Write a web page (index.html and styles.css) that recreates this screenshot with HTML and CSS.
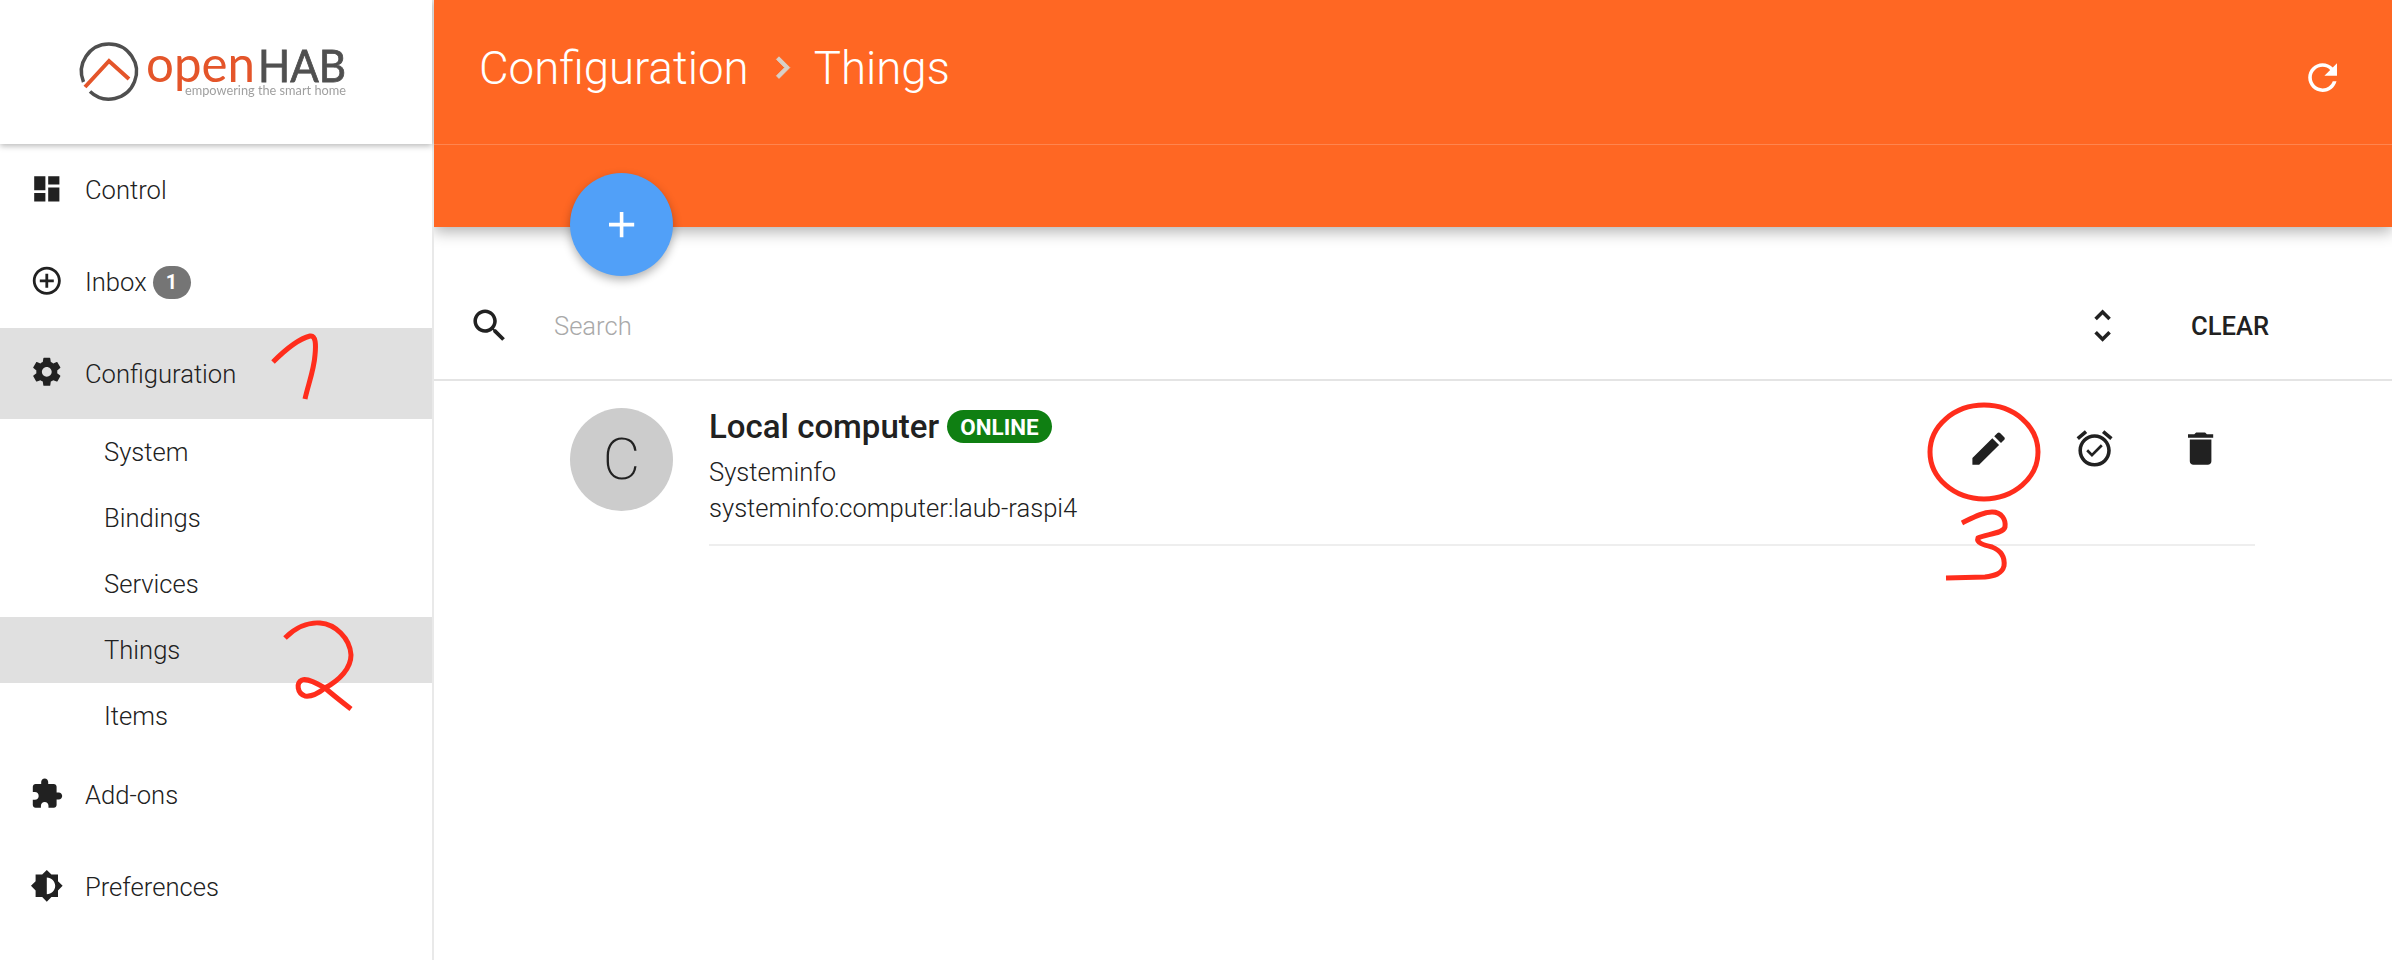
FILE: index.html
```html
<!DOCTYPE html>
<html lang="en">
<head>
<meta charset="utf-8">
<title>openHAB - Things</title>
<link rel="stylesheet" href="styles.css">
</head>
<body>
<aside class="sidebar">
  <div class="brand">
    <svg class="logo" viewBox="0 0 432 143" width="432" height="143">
      <path class="logo-ring" d="M83.500 82 A27.500 27.500 0 1 1 90 91.500"/>
      <path class="logo-roof" d="M85 87 L109 61 L129 79"/>
      <text class="logo-open" x="146" y="82" textLength="109" lengthAdjust="spacingAndGlyphs">open</text>
      <text class="logo-hab" x="258" y="82" textLength="88" lengthAdjust="spacingAndGlyphs">HAB</text>
      <text class="logo-tag" x="185" y="95" textLength="161" lengthAdjust="spacingAndGlyphs">empowering the smart home</text>
    </svg>
  </div>
  <nav class="nav">
    <a class="nav-item"><svg class="icon" viewBox="0 0 24 24"><path d="M3 13h8V3H3v10zm0 8h8v-6H3v6zm10 0h8V11h-8v10zm0-18v6h8V3h-8z"/></svg><span>Control</span></a>
    <a class="nav-item"><svg class="icon" viewBox="0 0 24 24"><path d="M13 7h-2v4H7v2h4v4h2v-4h4v-2h-4V7zm-1-5C6.480 2 2 6.480 2 12s4.480 10 10 10 10-4.480 10-10S17.520 2 12 2zm0 18c-4.410 0-8-3.590-8-8s3.590-8 8-8 8 3.590 8 8-3.590 8-8 8z"/></svg><span>Inbox</span><b class="count">1</b></a>
    <a class="nav-item is-active"><svg class="icon" viewBox="0 0 24 24"><path d="M19.430 12.980c.04-.32.07-.64.07-.98s-.03-.66-.07-.98l2.110-1.650c.19-.15.24-.42.12-.64l-2-3.460c-.12-.22-.39-.3-.61-.22l-2.490 1c-.52-.4-1.080-.73-1.690-.98l-.38-2.650C14.460 2.180 14.250 2 14 2h-4c-.25 0-.46.18-.49.42l-.38 2.650c-.61.25-1.170.59-1.690.98l-2.490-1c-.23-.09-.49 0-.61.22l-2 3.460c-.13.22-.07.49.12.64l2.110 1.650c-.04.32-.07.65-.07.98s.03.66.07.98l-2.110 1.650c-.19.15-.24.42-.12.64l2 3.460c.12.22.39.3.61.22l2.490-1c.52.4 1.080.73 1.690.98l.38 2.650c.03.24.24.42.49.42h4c.25 0 .46-.18.49-.42l.38-2.650c.61-.25 1.170-.59 1.690-.98l2.490 1c.23.09.49 0 .61-.22l2-3.460c.12-.22.07-.49-.12-.64l-2.110-1.650zM12 15.500c-1.930 0-3.500-1.570-3.500-3.500s1.570-3.500 3.500-3.500 3.500 1.570 3.500 3.500-1.570 3.500-3.500 3.500z"/></svg><span>Configuration</span></a>
    <a class="sub-item">System</a>
    <a class="sub-item">Bindings</a>
    <a class="sub-item">Services</a>
    <a class="sub-item is-active">Things</a>
    <a class="sub-item">Items</a>
    <a class="nav-item"><svg class="icon" viewBox="0 0 24 24"><path d="M20.500 11H19V7c0-1.100-.9-2-2-2h-4V3.500C13 2.120 11.880 1 10.500 1S8 2.120 8 3.500V5H4c-1.100 0-1.990.9-1.990 2v3.800H3.500c1.490 0 2.700 1.210 2.700 2.700s-1.210 2.700-2.700 2.700H2V20c0 1.100.9 2 2 2h3.800v-1.500c0-1.490 1.210-2.700 2.700-2.700 1.490 0 2.700 1.210 2.700 2.700V22H17c1.100 0 2-.9 2-2v-4h1.500c1.380 0 2.500-1.120 2.500-2.500S21.880 11 20.500 11z"/></svg><span>Add-ons</span></a>
    <a class="nav-item"><svg class="icon" viewBox="0 0 24 24"><path d="M20 15.310L23.310 12 20 8.690V4h-4.690L12 .69 8.690 4H4v4.690L.69 12 4 15.310V20h4.690L12 23.310 15.310 20H20v-4.690zM12 18V6c3.310 0 6 2.690 6 6s-2.690 6-6 6z"/></svg><span>Preferences</span></a>
  </nav>
</aside>
<main class="main">
  <header class="header">
    <div class="topbar">
      <h1 class="crumbs">
        <span>Configuration</span>
        <svg class="crumb-sep" viewBox="0 0 24 24"><path d="M10 6L8.590 7.410 13.170 12l-4.580 4.590L10 18l6-6z"/></svg>
        <span>Things</span>
      </h1>
      <svg class="icon-lg icon-white refresh" viewBox="0 0 24 24"><path d="M17.650 6.350C16.200 4.900 14.210 4 12 4c-4.420 0-7.990 3.580-7.990 8s3.570 8 7.990 8c3.730 0 6.840-2.550 7.730-6h-2.080c-.82 2.330-3.040 4-5.650 4-3.310 0-6-2.690-6-6s2.690-6 6-6c1.660 0 3.140.69 4.220 1.780L13 11h7V4l-2.350 2.350z"/></svg>
    </div>
    <div class="subbar"></div>
    <button class="fab" aria-label="Add"><svg class="icon-lg icon-white" viewBox="0 0 24 24"><path d="M19 13h-6v6h-2v-6H5v-2h6V5h2v6h6v2z"/></svg></button>
  </header>
  <div class="toolbar">
    <svg class="icon-lg" viewBox="0 0 24 24"><path d="M15.500 14h-.79l-.28-.27C15.410 12.590 16 11.110 16 9.500 16 5.910 13.090 3 9.500 3S3 5.910 3 9.500 5.910 16 9.500 16c1.610 0 3.090-.59 4.230-1.570l.27.28v.79l5 4.990L20.490 19l-4.990-5zm-6 0C7.010 14 5 11.990 5 9.500S7.010 5 9.500 5 14 7.010 14 9.500 11.990 14 9.500 14z"/></svg>
    <input class="search" type="text" placeholder="Search">
    <svg class="icon-lg" viewBox="0 0 24 24"><path d="M12 5.830L15.170 9l1.410-1.410L12 3 7.410 7.590 8.830 9 12 5.830zm0 12.340L8.830 15l-1.410 1.410L12 21l4.590-4.590L15.170 15 12 18.170z"/></svg>
    <span class="clear">CLEAR</span>
  </div>
  <section class="thing">
    <div class="avatar">C</div>
    <div class="thing-body">
      <div class="thing-text">
        <div class="thing-title">Local computer <span class="status">ONLINE</span></div>
        <div class="thing-line">Systeminfo</div>
        <div class="thing-line">systeminfo:computer:laub-raspi4</div>
      </div>
      <div class="actions">
        <svg class="icon-lg" viewBox="0 0 24 24"><path d="M3 17.250V21h3.750L17.810 9.940l-3.750-3.750L3 17.250zM20.710 7.040c.39-.39.39-1.020 0-1.410l-2.340-2.340c-.39-.39-1.020-.39-1.410 0l-1.830 1.830 3.750 3.750 1.830-1.830z"/></svg>
        <svg class="icon-lg" viewBox="0 0 24 24"><path d="M22 5.720l-4.600-3.860-1.290 1.530 4.600 3.860L22 5.720zM7.880 3.390L6.600 1.860 2 5.710l1.290 1.530 4.590-3.850zM12 4c-4.970 0-9 4.030-9 9s4.020 9 9 9c4.970 0 9-4.030 9-9s-4.030-9-9-9zm0 16c-3.870 0-7-3.130-7-7s3.130-7 7-7 7 3.130 7 7-3.130 7-7 7zm-1.460-5.470L8.410 12.400l-1.060 1.060 3.180 3.180 6-6-1.060-1.060-4.930 4.950z"/></svg>
        <svg class="icon-lg" viewBox="0 0 24 24"><path d="M6 19c0 1.100.9 2 2 2h8c1.100 0 2-.9 2-2V7H6v12zM19 4h-3.500l-1-1h-5l-1 1H5v2h14V4z"/></svg>
      </div>
    </div>
  </section>
</main>
<svg class="marks" viewBox="0 0 2392 960" width="2392" height="960" aria-hidden="true">
  <path d="M273 362 C285 350 298 339 310 336 C316 335 316 345 315 355 C314 370 308 385 305 399"/>
  <path d="M285 638 C295 628 308 622 320 623 C335 624 350 638 351 655 C351 668 340 680 325 688 C318 684 308 678 302 680 C296 683 297 693 305 696 C312 697 320 692 325 688 C333 695 342 702 351 709"/>
  <ellipse cx="1984" cy="452" rx="54" ry="47"/>
  <path d="M1962 523 C1972 518 1982 512 1992 512 C2002 512 2006 520 2005 527 C2003 534 1985 534 1978 538 C1976 543 1984 545 1992 547 C2002 551 2005 558 2004 566 C2002 574 1994 576 1985 577 L1946 578"/>
</svg>
</body>
</html>
```
FILE: styles.css
```css
* { box-sizing: border-box; }
html, body { margin: 0; height: 960px; overflow: hidden; }
body {
  display: flex;
  width: 2392px;
  background: #fff;
  color: #212121;
  font-family: Roboto, "Liberation Sans", sans-serif;
  font-weight: 300;
  font-size: 25.6px;
}
.icon { width: 33.600px; height: 33.600px; fill: #212121; flex: none; display: block; }
.icon-lg { width: 43.200px; height: 43.200px; fill: #212121; flex: none; display: block; }
.icon-white { fill: #fff; }

.sidebar { width: 434px; flex: none; border-right: 2px solid #e9e9e9; position: relative; }
.brand { height: 144px; background: #fff; box-shadow: 0 2px 6px rgba(0,0,0,.28); position: relative; }
.logo { display: block; filter: blur(.5px); }
.logo-ring { fill: none; stroke: #4f4f4f; stroke-width: 3.500; }
.logo-roof { fill: none; stroke: #e4552a; stroke-width: 4; }
.logo-open { fill: #e4552a; font-family: Lato, sans-serif; font-weight: 400; font-size: 50px; }
.logo-hab { fill: #505050; stroke: #505050; stroke-width: .8; font-family: Lato, sans-serif; font-weight: 400; font-size: 45px; }
.logo-tag { fill: #a0a0a0; font-family: Lato, sans-serif; font-weight: 400; font-size: 13px; }

.nav-item { display: flex; align-items: center; height: 92px; padding-left: 30.200px; }
.nav-item .icon { margin-top: -3px; }
.nav-item span { margin-left: 21.200px; }
.nav-item.is-active, .sub-item.is-active { background: #e0e0e0; }
.nav-item.is-active { height: 91px; }
.sub-item { display: flex; align-items: center; height: 66px; padding-left: 104px; }
.count {
  display: flex; align-items: center; justify-content: center;
  width: 38px; height: 33px; margin-left: 6px; border-radius: 17px;
  background: #757575; color: #fff; font-size: 20px; font-weight: 700;
}

.main { flex: 1; min-width: 0; overflow: hidden; }
.header { height: 227px; background: #ff6723; position: relative; box-shadow: 0 5px 14px rgba(0,0,0,.3); }
.topbar {
  display: flex; align-items: center; justify-content: space-between;
  height: 145px; padding: 0 48px 8px 45px;
  border-bottom: 1px solid rgba(255,255,255,.2);
}
.refresh { margin-top: 19px; }
.crumbs { display: flex; align-items: center; margin: 0; font-size: 45.600px; font-weight: 300; color: #fff; }
.crumb-sep { width: 43.200px; height: 43.200px; margin: 0 10px 0 12px; fill: #d8d0c8; stroke: #d8d0c8; stroke-width: .5; }
.fab {
  position: absolute; left: 136px; top: 173px;
  display: flex; align-items: center; justify-content: center;
  width: 103px; height: 103px; padding: 0; border: 0; border-radius: 50%;
  background: #51a0f8; box-shadow: 0 4px 10px rgba(0,0,0,.3);
}

.toolbar {
  display: flex; align-items: center;
  height: 154px; padding: 46px 123px 0 34.400px;
  border-bottom: 2px solid #e4e4e4;
}
.search {
  flex: 1; margin-left: 42.400px; padding: 0; border: 0; outline: 0; background: none;
  font: inherit; color: #212121;
}
.search::placeholder { color: #a9a9a9; opacity: 1; }
.clear { margin-left: 66.400px; font-size: 25.600px; font-weight: 500; }

.thing { display: flex; align-items: flex-start; padding: 27px 137px 0 136px; }
.avatar {
  display: flex; align-items: center; justify-content: center;
  width: 103px; height: 103px; flex: none; border-radius: 50%;
  background: #ccc; font-size: 57.600px; font-weight: 200;
}
.thing-body {
  flex: 1; display: flex; justify-content: space-between; align-items: flex-start;
  margin-left: 36px; padding: 0 32.400px 18px 0; border-bottom: 2px solid #eee;
}
.thing-title { display: flex; align-items: center; height: 37px; margin-bottom: 9px; font-size: 33px; font-weight: 500; white-space: pre; }
.status {
  display: inline-flex; align-items: center; height: 33px; padding: 0 13px;
  border-radius: 17px; background: #0f7f12; color: #fff; font-size: 22.400px; font-weight: 700;
}
.thing-line { height: 36px; line-height: 36px; }
.actions { display: flex; gap: 62.800px; margin-top: 19.400px; }

.marks { position: absolute; left: 0; top: 0; pointer-events: none; }
.marks path, .marks ellipse { fill: none; stroke: #ff2d1c; stroke-width: 5; }
```
